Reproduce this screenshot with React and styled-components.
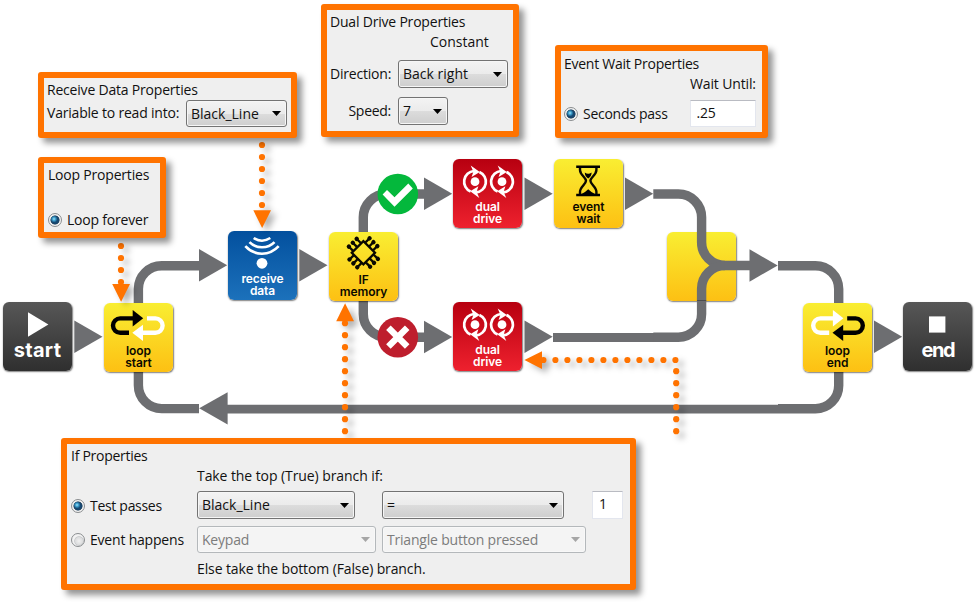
import React from "react";
import styled, { createGlobalStyle, css } from "styled-components";

const GRAY = "#6d6e71";
const ORANGE = "#ff7300";

const GlobalStyle = createGlobalStyle`
  body { margin: 0; background: #fff; overflow: hidden; }
  *, *::before, *::after { box-sizing: border-box; }
`;

const Canvas = styled.main`
  position: relative;
  width: 976px;
  height: 603px;
  overflow: hidden;
  background: #fff;
  font-family: "Open Sans", "Noto Sans", sans-serif;
  font-size: 14px;
  line-height: 20px;
  color: #111;
`;

const Layer = styled.svg`
  position: absolute;
  inset: 0;
  width: 976px;
  height: 603px;
  pointer-events: none;
`;

const Pointers = styled(Layer)`
  filter: drop-shadow(5px 4px 3px rgba(0, 0, 0, 0.3));
`;

/* ---------- flow blocks ---------- */

const tones = {
  dark: css`background: linear-gradient(#575757, #2f2f2f); color: #fff;`,
  yellow: css`background: linear-gradient(#f9ee32, #fdc013); color: #0b0900;`,
  blue: css`background: linear-gradient(#03509e, #1c71bb); color: #fff;`,
  red: css`background: linear-gradient(#b70010, #ee212e); color: #fff;`,
};

const Block = styled.div`
  position: absolute;
  left: ${(p) => p.$x}px;
  top: ${(p) => p.$y}px;
  width: 69px;
  height: 69px;
  border-radius: 6px;
  box-shadow: 0.5px 1px 1.5px rgba(0, 0, 0, 0.5);
  display: flex;
  flex-direction: column;
  align-items: center;
  ${(p) => tones[p.$tone]}
`;

const BlockIcon = styled.svg`
  flex: none;
  display: block;
  width: 69px;
  height: ${(p) => p.$h}px;
  overflow: visible;
`;

const BlockLabel = styled.span`
  font: 600 12px/12px Inter, "DejaVu Sans", sans-serif;
  letter-spacing: -0.1px;
  text-align: center;
  white-space: pre-line;
`;

const BigLabel = styled.span`
  font: 700 20px/20px Inter, "DejaVu Sans", sans-serif;
  letter-spacing: ${(p) => p.$spacing}px;
`;

/* ---------- property callouts ---------- */

const Callout = styled.section`
  position: absolute;
  left: ${(p) => p.$x}px;
  top: ${(p) => p.$y}px;
  width: ${(p) => p.$w}px;
  height: ${(p) => p.$h}px;
  border: 6px solid ${ORANGE};
  border-radius: 3px;
  background: #efefef;
  box-shadow: 5px 5px 6px rgba(0, 0, 0, 0.42);
  padding: ${(p) => p.$pad};
  display: flex;
  flex-direction: column;
`;

const Text = styled.span`
  letter-spacing: ${(p) => p.$ls ?? -0.2}px;
  white-space: nowrap;
`;

const Row = styled.div`
  display: flex;
  align-items: center;
  height: ${(p) => p.$h ?? 27}px;
  margin-top: ${(p) => p.$mt ?? 0}px;
  padding-left: ${(p) => p.$indent ?? 0}px;
`;

const FieldLabel = styled.div`
  flex: none;
  width: ${(p) => p.$w}px;
  text-align: ${(p) => p.$align ?? "left"};
  padding-bottom: ${(p) => p.$lift ?? 1}px;
`;

const RadioLabel = styled.div`
  flex: none;
  display: flex;
  align-items: center;
  width: 126px;
  padding-top: 1px;
`;

const SelectBox = styled.div`
  flex: none;
  display: flex;
  align-items: center;
  justify-content: space-between;
  width: ${(p) => p.$w}px;
  height: 100%;
  margin-left: ${(p) => p.$ml ?? 0}px;
  padding: 0 5px 0 4px;
  border: 1px solid ${(p) => (p.$off ? "#b4b8bb" : "#737373")};
  border-radius: 3px;
  color: ${(p) => (p.$off ? "#7c7c7c" : "#111")};
  background: ${(p) =>
    p.$off ? "#f4f4f4" : "linear-gradient(#f3f3f3 0%, #ebebeb 50%, #dcdcdc 51%, #cecece 100%)"};
  box-shadow: inset 0 0 0 1px ${(p) => (p.$off ? "#f8f8f8" : "#f6f6f6")};
`;

const Caret = styled.svg`
  width: 9px;
  height: 5px;
  fill: ${(p) => (p.$off ? "#a6a6a6" : "#000")};
`;

const Input = styled.div`
  flex: none;
  width: ${(p) => p.$w}px;
  height: 100%;
  margin-left: ${(p) => p.$ml}px;
  padding: 2px 6px;
  background: #fff;
  border: 1px solid #e3e6ee;
  border-top-color: #b9bbc2;
`;

const RadioDot = styled.span`
  flex: none;
  width: 14px;
  height: 14px;
  margin-right: 5px;
  border-radius: 50%;
  border: 1px solid #8a8d8f;
  background: ${(p) =>
    p.$on
      ? "radial-gradient(circle at 5px 5px, #a9e2f8 0, #3fa2cf 1.6px, rgba(21,80,124,0) 3.4px), radial-gradient(circle at 6px 6px, #15507c 0, #17466e 3.6px, #22435e 4.2px, #f2f2f2 4.9px)"
      : "radial-gradient(circle at 7px 7px, #f1f1f1 0, #dcddde 3.6px, #c9cbcd 4.4px, #f2f2f2 5.2px)"};
`;

function Select({ children, w, ml, off, ls }) {
  return (
    <SelectBox $w={w} $ml={ml} $off={off}>
      <Text $ls={ls}>{children}</Text>
      <Caret $off={off} viewBox="0 0 9 5"><path d="M0 0H9L4.5 5Z" /></Caret>
    </SelectBox>
  );
}

/* ---------- icons ---------- */

function LoopIcon({ left, right, dx = 0 }) {
  return (
    <BlockIcon $h={42} viewBox="0 0 69 42">
      <g transform={`translate(${dx} 0)`}>
        <path d="M25 29.8H16.2a7.2 7.2 0 0 1 0-14.4H30" fill="none" stroke={left} strokeWidth="4.4" />
        <path d="M28.7 7L39.2 15.3 28.7 23.4Z" fill={left} />
        <path d="M43 15.4H51.4a7.2 7.2 0 0 1 0 14.4H38" fill="none" stroke={right} strokeWidth="4.4" />
        <path d="M39 21.7V38L28.3 29.8Z" fill={right} />
      </g>
    </BlockIcon>
  );
}

function Spinner({ x }) {
  return (
    <g transform={`translate(${x} 22.7)`}>
      <circle r="4.4" fill="#fff" />
      <path d="M-4.4 9.8A10.7 10.7 0 0 1-1-10.7M4.4-9.8A10.7 10.7 0 0 1 1 10.7" fill="none" stroke="#fff" strokeWidth="2.7" />
      <path d="M-4.3-16.2L4.8-9.6-3.4-4.6-1.6-10Z" fill="#fff" />
      <path d="M4.3 16.2L-4.8 9.6 3.4 4.6 1.6 10Z" fill="#fff" />
    </g>
  );
}

function DriveIcon() {
  return (
    <BlockIcon $h={42} viewBox="0 0 69 42">
      <Spinner x={22} />
      <Spinner x={49} />
    </BlockIcon>
  );
}

function SignalIcon() {
  return (
    <BlockIcon $h={42} viewBox="0 0 69 42">
      <circle cx="34" cy="32.3" r="5.4" fill="#fff" />
      <g fill="none" stroke="#fff" strokeWidth="2.6">
        <path d="M25.7 7Q34 12.4 42.3 7" />
        <path d="M21.5 11.2C28 18 40 18 46.5 11.2" />
        <path d="M17.3 15.2C26.5 25.2 41.5 25.2 50.7 15.2" />
      </g>
    </BlockIcon>
  );
}

function ChipIcon() {
  return (
    <BlockIcon $h={42} viewBox="0 0 69 42">
      <g transform="translate(34.4 20.8) rotate(45)" stroke="#0b0900" strokeWidth="2.3">
        <rect x="-8.2" y="-8.2" width="16.4" height="16.4" fill="none" />
        {[0, 90, 180, 270].map((a) => (
          <g key={a} transform={`rotate(${a})`}>
            {[-5.9, -0.4, 5.1].map((t) => (
              <g key={t}>
                <path d={`M${t} -8V-14.5`} />
                <circle cx={t} cy="-14.6" r="2.2" fill="#0b0900" stroke="none" />
              </g>
            ))}
          </g>
        ))}
      </g>
    </BlockIcon>
  );
}

function HourglassIcon() {
  return (
    <BlockIcon $h={42} viewBox="0 0 69 42">
      <path d="M22.2 6.5H46V9H22.2ZM22.2 34.7H46V37.2H22.2Z" />
      <path d="M26 9V11C26 16 32 18.5 32 21.8S26 28 26 32.8V35M42.4 9V11C42.4 16 36.4 18.5 36.4 21.8S42.4 28 42.4 32.8V35" fill="none" stroke="#0b0900" strokeWidth="2.4" />
      <path d="M30.8 13.6Q34.2 16 37.6 13.6 37.6 17.5 34.2 19.4 30.8 17.5 30.8 13.6Z" />
      <path d="M27.5 35Q31.5 33 34.2 30.2 37 33 41 35Z" />
    </BlockIcon>
  );
}

/* ---------- connectors ---------- */

const rightHeads = [
  [74.3, 336.7], [199, 265.3], [299.3, 265.3], [424, 193.7], [424, 337], [524.5, 193.7],
  [625, 193.7], [524.5, 336.7], [749.5, 265.5], [874, 336.7],
];

function Wires() {
  return (
    <Layer viewBox="0 0 976 603">
      <g fill="none" stroke={GRAY} strokeWidth="9.4">
        <path d="M138.4 305V289A23.3 23.3 0 0 1 161.7 265.7H200" />
        <path d="M138.4 370V385.3A23.3 23.3 0 0 0 161.7 408.6H199" />
        <path d="M227 409.1H778" strokeWidth="8.8" />
        <path d="M778 408.7H815.4A23.3 23.3 0 0 0 838.7 385.4V370" />
        <path d="M778 265.7H815.4A23.3 23.3 0 0 1 838.7 289V305" />
        <path d="M363.3 233V217.3A23.3 23.3 0 0 1 386.6 194H425" />
        <path d="M363.3 299V313.9A23.3 23.3 0 0 0 386.6 337.2H425" />
      </g>
      <g fill={GRAY}>
        {rightHeads.map(([x, y]) => (
          <path key={`${x}-${y}`} d={`M${x} ${y - 16.2}L${x + 28.2} ${y}L${x} ${y + 16.2}Z`} />
        ))}
        <path d="M199.2 408.3L227.6 392.2V424.5Z" />
      </g>
      <circle cx="397.8" cy="194" r="20.3" fill="#04b83c" />
      <path d="M382.6 194.5L387 190 394.5 197.2 408.3 183.6 412.8 188.4 394.5 206.7Z" fill="#fff" />
      <circle cx="397.8" cy="337.2" r="20.3" fill="#be1e2d" />
      <path d="M388.4 327.8L407.2 346.6M407.2 327.8L388.4 346.6" stroke="#fff" strokeWidth="6.4" />
    </Layer>
  );
}

function MergeWires() {
  return (
    <Layer viewBox="0 0 976 603">
      <g fill="none" stroke={GRAY} strokeWidth="9.4">
        <path d="M653.3 194H678.3A23.3 23.3 0 0 1 701.6 217.3V242.2A23.3 23.3 0 0 0 724.9 265.5H750" />
        <path d="M553 337.5H654" strokeWidth="9" />
        <path d="M653.3 337.2H678.3A23.3 23.3 0 0 0 701.6 313.9V288.8A23.3 23.3 0 0 1 724.9 265.5" />
      </g>
      <path d="M697 300.5H706.2" stroke="#4c4d4f" strokeWidth="1" />
    </Layer>
  );
}

const range = (from, to) =>
  Array.from({ length: Math.floor((to - from) / 12) + 1 }, (_, i) => from + i * 12);

const dots = [
  ...range(145, 205).map((y) => [262, y]),
  ...range(246, 282).map((y) => [121, y]),
  ...range(323.2, 431.5).map((y) => [345, y]),
  ...range(543.4, 676).map((x) => [x, 360]),
  ...range(371.2, 431.5).map((y) => [676.2, y]),
];

function PointerArrows() {
  return (
    <Pointers viewBox="0 0 976 603" fill={ORANGE}>
      {dots.map(([x, y]) => <circle key={`${x}-${y}`} cx={x} cy={y} r="3.1" />)}
      <path d="M253.3 210.2H271L262.1 228Z" />
      <path d="M112.2 284H130L121.1 301.7Z" />
      <path d="M336.2 321.2H354L345.1 303.3Z" />
      <path d="M542 351.2V369L524.4 360.1Z" />
    </Pointers>
  );
}

export default function App() {
  return (
    <>
      <GlobalStyle />
      <Canvas>
        <Wires />

        <Block $x={3} $y={302} $tone="dark">
          <BlockIcon $h={38} viewBox="0 0 69 38"><path d="M25 10.3L45.4 22.5 25 34.8Z" fill="#fff" /></BlockIcon>
          <BigLabel $spacing={0.3}>start</BigLabel>
        </Block>
        <Block $x={104} $y={303} $tone="yellow">
          <LoopIcon left="#000" right="#fff" />
          <BlockLabel>{"loop\nstart"}</BlockLabel>
        </Block>
        <Block $x={228} $y={230.5} $tone="blue">
          <SignalIcon />
          <BlockLabel>{"receive\ndata"}</BlockLabel>
        </Block>
        <Block $x={329} $y={231.5} $tone="yellow">
          <ChipIcon />
          <BlockLabel>{"IF\nmemory"}</BlockLabel>
        </Block>
        <Block $x={453} $y={159} $tone="red">
          <DriveIcon />
          <BlockLabel>{"dual\ndrive"}</BlockLabel>
        </Block>
        <Block $x={554} $y={159} $tone="yellow">
          <HourglassIcon />
          <BlockLabel>{"event\nwait"}</BlockLabel>
        </Block>
        <Block $x={453} $y={302} $tone="red">
          <DriveIcon />
          <BlockLabel>{"dual\ndrive"}</BlockLabel>
        </Block>
        <Block $x={667.3} $y={231.5} $tone="yellow" />
        <Block $x={803} $y={303} $tone="yellow">
          <LoopIcon left="#fff" right="#000" dx={1.2} />
          <BlockLabel>{"loop\nend"}</BlockLabel>
        </Block>
        <Block $x={903.4} $y={302} $tone="dark">
          <BlockIcon $h={38} viewBox="0 0 69 38"><path d="M26 14.4H42.4V30.6H26Z" fill="#fff" /></BlockIcon>
          <BigLabel $spacing={-1.4}>end</BigLabel>
        </Block>

        <MergeWires />
        <PointerArrows />

        <Callout $x={38} $y={72} $w={259} $h={66} $pad="2px 0 0 3px">
          <Text>Receive Data Properties</Text>
          <Row>
            <FieldLabel $w={139} $lift={2}><Text>Variable to read into:</Text></FieldLabel>
            <Select w={101} ls={0}>Black_Line</Select>
          </Row>
        </Callout>

        <Callout $x={38} $y={157} $w={128} $h={81} $pad="2px 0 0 4px">
          <Text>Loop Properties</Text>
          <Row $h={20} $mt={25}>
            <RadioDot $on />
            <Text>Loop forever</Text>
          </Row>
        </Callout>

        <Callout $x={321} $y={4} $w={198} $h={133} $pad="2px 0 0 3px">
          <Text>Dual Drive Properties</Text>
          <Row $h={20} $indent={100}><Text $ls={0}>Constant</Text></Row>
          <Row $h={28} $mt={8}>
            <FieldLabel $w={61} $align="right"><Text>Direction:</Text></FieldLabel>
            <Select w={110} ml={7} ls={0}>Back right</Select>
          </Row>
          <Row $h={28} $mt={9}>
            <FieldLabel $w={61} $align="right"><Text $ls={-0.28}>Speed:</Text></FieldLabel>
            <Select w={50} ml={7}>7</Select>
          </Row>
        </Callout>

        <Callout $x={555} $y={45} $w={213} $h={93} $pad="3px 0 0 3px">
          <Text $ls={-0.26}>Event Wait Properties</Text>
          <Row $h={20} $indent={126}><Text $ls={-0.14}>Wait Until:</Text></Row>
          <Row $mt={6}>
            <RadioDot $on />
            <Text $ls={-0.27}>Seconds pass</Text>
            <Input $w={66} $ml={22}><Text>.25</Text></Input>
          </Row>
        </Callout>

        <Callout $x={61} $y={438} $w={575} $h={152} $pad="2px 0 0 4px">
          <Text $ls={-0.28}>If Properties</Text>
          <Row $h={20} $indent={126}><Text $ls={-0.08}>Take the top (True) branch if:</Text></Row>
          <Row $h={28} $mt={5}>
            <RadioLabel>
              <RadioDot $on />
              <Text $ls={-0.3}>Test passes</Text>
            </RadioLabel>
            <Select w={158} ls={0}>Black_Line</Select>
            <Select w={182} ml={27}>=</Select>
            <Input $w={31} $ml={28}><Text>1</Text></Input>
          </Row>
          <Row $mt={7}>
            <RadioLabel>
              <RadioDot />
              <Text>Event happens</Text>
            </RadioLabel>
            <Select off w={179}>Keypad</Select>
            <Select off w={204} ml={6}>Triangle button pressed</Select>
          </Row>
          <Row $h={20} $mt={6} $indent={126}><Text $ls={-0.12}>Else take the bottom (False) branch.</Text></Row>
        </Callout>
      </Canvas>
    </>
  );
}
